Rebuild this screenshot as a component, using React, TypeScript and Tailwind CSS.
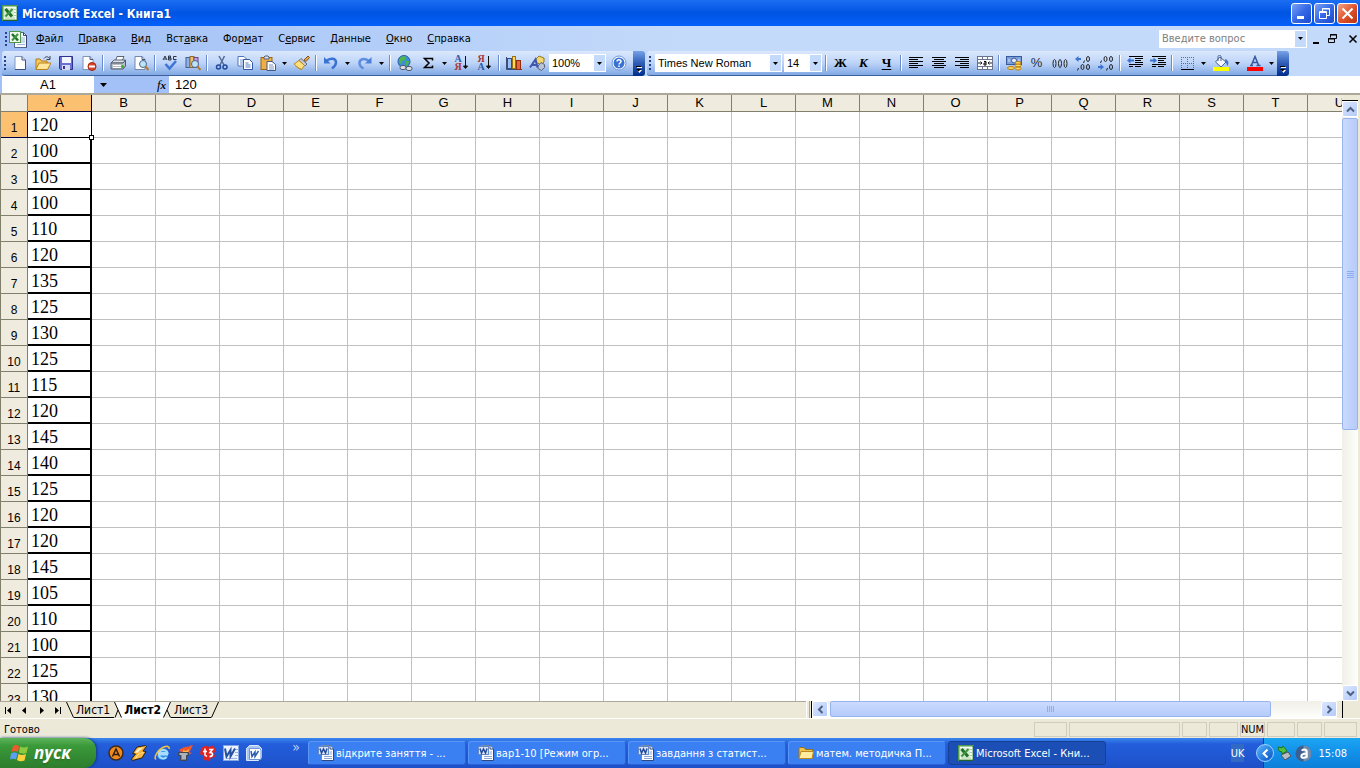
import { ReactNode } from "react";

const columns = "ABCDEFGHIJKLMNOPQRSTU".split("");

const values = [
  120, 100, 105, 100, 110, 120, 135, 125, 130, 125, 115, 120, 145, 140, 125,
  120, 120, 145, 105, 110, 100, 125, 130,
];

const menus = [
  ["", "Ф", "айл"],
  ["", "П", "равка"],
  ["", "В", "ид"],
  ["Вст", "а", "вка"],
  ["Фор", "м", "ат"],
  ["С", "е", "рвис"],
  ["", "Д", "анные"],
  ["", "О", "кно"],
  ["", "С", "правка"],
];

const ui = "font-['Tahoma','DejaVu_Sans_Condensed','Noto_Sans',sans-serif]";
const arial = "font-['Liberation_Sans',Arial,sans-serif]";

function Icon({
  children,
  className = "size-4",
  box = "0 0 16 16",
}: {
  children: ReactNode;
  className?: string;
  box?: string;
}) {
  return (
    <svg viewBox={box} className={`shrink-0 ${className}`} fill="none" aria-hidden="true">
      {children}
    </svg>
  );
}

function ExcelIcon() {
  return (
    <Icon>
      <rect x="0.75" y="0.75" width="14.500" height="14.500" fill="#f4faf0" stroke="#4c9a4a" strokeWidth="1.500" />
      <path d="M10 4.500h4M10 7.500h4M10 10.500h4M3 13h10" stroke="#a9cfa2" />
      <rect x="2" y="3" width="10" height="9" fill="#d5ead0" />
      <path d="M3.500 4l6.500 7.500" stroke="#1f7028" strokeWidth="3" />
      <path d="M10.500 4L3.500 11.500" stroke="#3f9444" strokeWidth="2" />
      <path d="M15.500 1v14.500H1" stroke="#23632a" />
    </Icon>
  );
}

function ExcelDocIcon() {
  return (
    <Icon className="h-[18px] w-[18px]" box="0 0 18 18">
      <path d="M7 2.500h7.500l3 3v12H5.500v-5" fill="#f7faff" stroke="#54688f" />
      <path d="M14.500 2.500v3h3v12" stroke="#33456e" />
      <path d="M12 8h4M12 10h4M12 12h4M8 14.500h8" stroke="#9fb4da" />
      <rect x="0.500" y="1.500" width="11" height="11" fill="#eef7ea" stroke="#4c9a4a" />
      <path d="M3 4l6 6.500" stroke="#1f7028" strokeWidth="2.500" />
      <path d="M9 4l-6 6.500" stroke="#3f9444" strokeWidth="2" />
    </Icon>
  );
}

function WordDocIcon() {
  return (
    <Icon>
      <path d="M3.500 0.500h9l3 3.500v11.500h-12z" fill="#fdfdff" stroke="#7386ab" />
      <path d="M12 0.500V4h3.500v11.500h-12" stroke="#2f477e" />
      <path d="M11.500 7h2.500M11.500 9h2.500M6 11.500h8M6 13.500h8" stroke="#8aa4d4" />
      <rect x="0.500" y="1.500" width="10" height="8" fill="#d7e3f9" stroke="#6487c6" />
      <path d="M2 3.500l1.500 4.500 2-4 2 4L9 3.500" stroke="#244a9b" strokeWidth="1.500" />
    </Icon>
  );
}

function Triangle() {
  return (
    <svg viewBox="0 0 5 3" className="h-[3px] w-[5px] shrink-0" aria-hidden="true">
      <path d="M0 0h5L2.500 3z" fill="#000" />
    </svg>
  );
}

function Tool({ label, children }: { label: string; children: ReactNode }) {
  return (
    <button
      type="button"
      aria-label={label}
      className="flex h-6 w-[23px] shrink-0 items-center justify-center"
    >
      {children}
    </button>
  );
}

function More({ label }: { label: string }) {
  return (
    <button
      type="button"
      aria-label={label}
      className="flex h-6 w-[11px] shrink-0 items-center justify-center"
    >
      <Triangle />
    </button>
  );
}

function Separator() {
  return (
    <div className="flex w-[6px] shrink-0 justify-center">
      <div className="box-content h-4 w-px border-r border-white bg-[#6a8ccb]" />
    </div>
  );
}

function Grip() {
  return (
    <div className="flex w-[6px] shrink-0 flex-col items-center gap-[2px]">
      {[0, 1, 2, 3].map((i) => (
        <div key={i} className="size-[2px] bg-[#27418e]" />
      ))}
    </div>
  );
}

function Combo({
  label,
  value,
  className,
}: {
  label: string;
  value: string;
  className: string;
}) {
  return (
    <div className={`relative h-[18px] shrink-0 bg-white ${className}`}>
      <select
        aria-label={label}
        className={`block h-full w-full appearance-none pl-[3px] text-[11px] text-black ${arial}`}
      >
        <option>{value}</option>
      </select>
      <span className="pointer-events-none absolute inset-y-px right-px flex w-[11px] items-center justify-center bg-[#c4dafa]">
        <Triangle />
      </span>
    </div>
  );
}

function ToolbarEnd() {
  return (
    <button
      type="button"
      aria-label="Параметры панелей инструментов"
      className="flex h-[25px] w-3 shrink-0 items-end justify-center rounded-r-[3px] bg-linear-to-b from-[#76a2e8] via-[#2d5bb4] to-[#002c8c] pb-[3px]"
    >
      <svg viewBox="0 0 6 7" className="h-[7px] w-[6px]" aria-hidden="true">
        <path d="M1 1h5v1H1zM1 4h5L3.500 7z" fill="#fff" />
        <path d="M0 0h5v1H0zM0 3h5L2.500 5.500z" fill="#000" />
      </svg>
    </button>
  );
}

function Glass() {
  return (
    <>
      <circle cx="10" cy="9" r="3.500" fill="#bfe2f7" stroke="#48688f" />
      <path d="M12.500 11.500L15.500 15" stroke="#b8792d" strokeWidth="2" />
    </>
  );
}

function SortLetters({ first, second }: { first: ReactNode; second: ReactNode }) {
  return (
    <span className="flex items-center">
      <span className="flex flex-col font-['Liberation_Serif',serif] text-[10px] leading-[8px] font-bold">
        {first}
        {second}
      </span>
      <Icon className="h-4 w-[7px]" box="0 0 7 16">
        <path d="M3.500 1v12M1.500 11l2 2.500 2-2.500z" stroke="#111" fill="#111" />
      </Icon>
    </span>
  );
}

const standardBar =
  "flex h-[25px] items-center bg-linear-to-b from-[#dbe8fc] via-[#bdd4f8] to-[#82a9e4] border-b border-[#3b619c]";

function StandardToolbar() {
  return (
    <div className="flex shrink-0">
      <div className={`${standardBar} rounded-l-[3px] pr-[3px]`}>
        <Grip />
        <Tool label="Создать">
          <Icon>
            <path d="M3 1.500h7l3.500 3.500v9.500H3z" fill="#fff" stroke="#8298c4" />
            <path d="M10 1.500V5h3.500v9.500H3" stroke="#3c4f7e" />
          </Icon>
        </Tool>
        <Tool label="Открыть">
          <Icon>
            <path d="M1 14V4h4l1.500 2H12v8z" fill="#f6ca5c" stroke="#b17a18" />
            <path d="M1 14.500L4 8h12l-3.500 6.500z" fill="#ffe69a" stroke="#b9821d" />
            <path d="M9 3.500c2-2.500 4-2 5.500 0M15 1v3.500h-3.500" stroke="#333c52" />
          </Icon>
        </Tool>
        <Tool label="Сохранить">
          <Icon>
            <path d="M1.500 1.500h13v13h-12l-1-1z" fill="#6b6fd4" stroke="#2e318f" />
            <rect x="4" y="2" width="9" height="6" fill="#f2f5ff" />
            <rect x="4" y="10" width="8" height="5" fill="#d5daf2" />
            <rect x="5" y="11" width="2" height="3" fill="#30348c" />
          </Icon>
        </Tool>
        <Tool label="Разрешения">
          <Icon>
            <path d="M2 1.500h7L12 4.500v10H2z" fill="#fff" stroke="#8093b9" />
            <path d="M9 1.500v3h3" stroke="#45577f" />
            <circle cx="11" cy="11.500" r="4" fill="#d7482a" stroke="#a52814" />
            <rect x="8" y="10.500" width="6" height="2" fill="#fff" />
          </Icon>
        </Tool>
        <Separator />
        <Tool label="Печать">
          <Icon>
            <path d="M5.500 6l1.500-4.500h7L12 6z" fill="#fff" stroke="#596477" />
            <path d="M1 8l3-3h11.500l-2 3z" fill="#dfe2e8" stroke="#596477" />
            <path d="M1 8h12l2.500-3v6L13 14H1z" fill="#b7bdc7" stroke="#515a6a" />
            <path d="M3 10.500h8M3 12.500h8" stroke="#fff" />
            <circle cx="12.500" cy="11.500" r="1.500" fill="#35b030" />
          </Icon>
        </Tool>
        <Tool label="Просмотр">
          <Icon>
            <path d="M2 1.500h7L12 4.500v10H2z" fill="#fff" stroke="#7186b0" />
            <path d="M9 1.500v3h3" stroke="#45577f" />
            <Glass />
          </Icon>
        </Tool>
        <Separator />
        <Tool label="Орфография">
          <Icon>
            <path d="M1 5l2-4 2 4M2 4h2M6.500 1v4h2.500V3H7h1.500V1zM14.500 1.500h-3v3h3" stroke="#2b3447" />
            <path d="M3.500 9l4 4.500L14 6" stroke="#3f74d6" strokeWidth="2.500" />
          </Icon>
        </Tool>
        <Tool label="Справочные материалы">
          <Icon>
            <rect x="1" y="2.500" width="4" height="10" fill="#8db1e8" stroke="#45609c" />
            <rect x="5" y="1.500" width="4" height="11" fill="#eec067" stroke="#92692a" />
            <rect x="9" y="2.500" width="4" height="10" fill="#c89cd8" stroke="#664789" />
            <Glass />
          </Icon>
        </Tool>
        <Separator />
        <Tool label="Вырезать">
          <Icon>
            <path d="M5 1l5 9M10.500 1l-4.500 9" stroke="#546b98" strokeWidth="1.500" />
            <circle cx="4.500" cy="12" r="2" stroke="#21499c" strokeWidth="1.500" />
            <circle cx="11" cy="12" r="2" stroke="#21499c" strokeWidth="1.500" />
          </Icon>
        </Tool>
        <Tool label="Копировать">
          <Icon>
            <path d="M1 1.500h6l2.500 2.500v7H1z" fill="#fff" stroke="#5273bc" />
            <path d="M3 5h4M3 7h4M3 9h3" stroke="#6f90d2" />
            <path d="M6.500 4.500h6l3 3v7h-9z" fill="#fff" stroke="#3458a8" />
            <path d="M8.500 8h3M8.500 10h5M8.500 12h5" stroke="#5078c8" />
          </Icon>
        </Tool>
        <Tool label="Вставить">
          <Icon>
            <rect x="1" y="2.500" width="11" height="12" fill="#edae43" stroke="#9c6417" />
            <path d="M4 4V2l1-1h3l1 1v2z" fill="#dce2ed" stroke="#555f73" />
            <path d="M7 6.500h5l3.500 3v6H7z" fill="#fff" stroke="#40588c" />
            <path d="M9 10h4M9 12h5M9 14h5" stroke="#7b95c6" />
          </Icon>
        </Tool>
        <More label="Параметры вставки" />
        <Tool label="Формат по образцу">
          <Icon>
            <path d="M10 5l4-4 1.500 1.500-3.500 4z" fill="#e9a548" stroke="#80551c" />
            <path d="M7 3.500l6 5.500-2 2-6-5.500z" fill="#c7cbd6" stroke="#636a7d" />
            <path d="M5 5.500l5.500 5-3.500 4.500-1-2-1 1-1-2-1.500 0-1-2-1.500-1z" fill="#ffe27d" stroke="#b78922" />
          </Icon>
        </Tool>
        <Separator />
        <Tool label="Отменить">
          <Icon>
            <path d="M3 6c5-4 10-2.500 10 1.500 0 3-2 4.500-4 6" stroke="#3a73d4" strokeWidth="2.500" />
            <path d="M1 2v6.500h6.500z" fill="#3a73d4" />
          </Icon>
        </Tool>
        <More label="Список отмены" />
        <Tool label="Вернуть">
          <Icon>
            <path d="M12 6C7 2.500 2.500 4 2.500 8c0 2.500 2 4.500 4 5.500" stroke="#5e8ee0" strokeWidth="2.500" />
            <path d="M14.500 2v6.500H8z" fill="#4d80d8" />
          </Icon>
        </Tool>
        <More label="Список возврата" />
        <Separator />
        <Tool label="Гиперссылка">
          <Icon>
            <circle cx="7" cy="6.500" r="6" fill="#3e8fd9" stroke="#2a5ba3" />
            <path d="M3 3c2-2 5-2 6-1l-1 3-3 1-1 3-2-2zM9 6l3 0-1 4-2 1z" fill="#4db849" />
            <rect x="3" y="10.500" width="6" height="4" rx="2" stroke="#525a6b" fill="#d9dde6" />
            <rect x="9" y="11.500" width="6" height="4" rx="2" stroke="#525a6b" fill="#d9dde6" />
          </Icon>
        </Tool>
        <Tool label="Автосумма">
          <Icon>
            <path d="M12.500 5.500V3.500h-8L9 8l-4.500 4.500h8v-2" stroke="#000" strokeWidth="1.500" />
          </Icon>
        </Tool>
        <More label="Функции" />
        <Tool label="По возрастанию">
          <SortLetters
            first={<span className="text-[#3058a8]">А</span>}
            second={<span className="text-[#a63838]">Я</span>}
          />
        </Tool>
        <Tool label="По убыванию">
          <SortLetters
            first={<span className="text-[#a63838]">Я</span>}
            second={<span className="text-[#3058a8]">А</span>}
          />
        </Tool>
        <Separator />
        <Tool label="Мастер диаграмм">
          <Icon>
            <path d="M0.500 2v12.500H16" stroke="#3a4c78" />
            <rect x="1.500" y="3.500" width="4" height="10" fill="#9fc0f5" stroke="#2d4f99" />
            <rect x="6.500" y="1.500" width="3" height="12" fill="#ffd75a" stroke="#997016" />
            <rect x="10.500" y="5.500" width="4" height="9" fill="#e8663a" stroke="#8f2e12" />
          </Icon>
        </Tool>
        <Tool label="Рисование">
          <Icon>
            <path d="M7 4l3-3 5 2v4l-3 3-5-3z" fill="#f3d66d" stroke="#947726" />
            <path d="M9 11l3-3.500 3.500 2v3l-3 3-3.500-2z" fill="#b9c3d7" stroke="#59647c" />
            <path d="M1 12.500L6.500 4.500l2 8M3 10h5" stroke="#3f56b0" strokeWidth="2" />
          </Icon>
        </Tool>
        <Combo label="Масштаб" value="100%" className="mx-px w-[57px]" />
        <Tool label="Справка">
          <Icon>
            <circle cx="8" cy="8" r="7" fill="#fff" stroke="#6d97dd" />
            <circle cx="8" cy="8" r="5.500" fill="#3972d3" />
            <path d="M6 6.500C6 4 10 4 10 6.500c0 1.500-2 1.500-2 3M8 10.500V12" stroke="#fff" strokeWidth="1.500" />
          </Icon>
        </Tool>
      </div>
      <ToolbarEnd />
    </div>
  );
}

function Lines({ d }: { d: string }) {
  return (
    <Icon>
      <path d={d} stroke="#000" />
    </Icon>
  );
}

function FormattingToolbar() {
  return (
    <div className="flex shrink-0">
      <div className={`${standardBar} rounded-l-[3px]`}>
        <Grip />
        <Combo label="Шрифт" value="Times New Roman" className="mr-px ml-[2px] w-[127px]" />
        <Combo label="Размер" value="14" className="mx-px w-[38px]" />
        <Separator />
        <Tool label="Полужирный">
          <span className="font-['Liberation_Serif',serif] text-[13px] leading-4 font-bold">Ж</span>
        </Tool>
        <Tool label="Курсив">
          <span className="font-['Liberation_Serif',serif] text-[13px] leading-4 font-bold italic">К</span>
        </Tool>
        <Tool label="Подчеркнутый">
          <span className="font-['Liberation_Serif',serif] text-[13px] leading-4 font-bold underline underline-offset-2">
            Ч
          </span>
        </Tool>
        <Separator />
        <Tool label="По левому краю">
          <Lines d="M1 2.500h14M1 4.500h9M1 6.500h14M1 8.500h9M1 10.500h14M1 12.500h9" />
        </Tool>
        <Tool label="По центру">
          <Lines d="M1 2.500h14M3 4.500h10M1 6.500h14M3 8.500h10M1 10.500h14M3 12.500h10" />
        </Tool>
        <Tool label="По правому краю">
          <Lines d="M1 2.500h14M6 4.500h9M1 6.500h14M6 8.500h9M1 10.500h14M6 12.500h9" />
        </Tool>
        <Tool label="Объединить">
          <Icon>
            <rect x="0.500" y="1.500" width="15" height="13" fill="#fff" stroke="#68758c" />
            <path d="M5.500 1v3M10.500 1v3M5.500 12v3M10.500 12v3M1 4.500h14M1 11.500h14" stroke="#68758c" />
            <path d="M1 8h4M3.500 6.500L5 8 3.500 9.500M15 8h-4M12.500 6.500L11 8l1.500 1.500" stroke="#222" />
            <path d="M7 6.500h2V10H7V8h2" stroke="#000" />
          </Icon>
        </Tool>
        <Separator />
        <Tool label="Денежный формат">
          <Icon>
            <rect x="0.500" y="1.500" width="15" height="8" fill="#7f9fd9" stroke="#38599c" />
            <circle cx="8" cy="5.500" r="2.500" fill="#dfeafb" stroke="#38599c" />
            <path d="M3 4v3M13 4v3" stroke="#dfeafb" />
            <ellipse cx="12" cy="8" rx="3" ry="1.500" fill="#ffd75e" stroke="#b37d12" />
            <ellipse cx="12" cy="10.500" rx="3" ry="1.500" fill="#ffd75e" stroke="#b37d12" />
            <ellipse cx="12" cy="13.500" rx="3" ry="1.500" fill="#ffd75e" stroke="#b37d12" />
            <ellipse cx="5" cy="13" rx="3.500" ry="1.500" fill="#ffd75e" stroke="#b37d12" />
          </Icon>
        </Tool>
        <Tool label="Процентный формат">
          <span className={`text-[13px] text-[#222c44] ${arial}`}>%</span>
        </Tool>
        <Tool label="Формат с разделителями">
          <Icon>
            <ellipse cx="2.500" cy="8.500" rx="1.500" ry="4" stroke="#222" />
            <ellipse cx="8" cy="8.500" rx="1.500" ry="4" stroke="#222" />
            <ellipse cx="13.500" cy="8.500" rx="1.500" ry="4" stroke="#222" />
          </Icon>
        </Tool>
        <Tool label="Увеличить разрядность">
          <Icon>
            <path d="M0 4L3.500 1v2H6v2H3.500v2z" fill="#3d73d0" />
            <path d="M9.500 5.500L8.500 8M3.500 13L2.500 15.500" stroke="#222" />
            <ellipse cx="13" cy="4" rx="1.500" ry="2.500" stroke="#222" />
            <ellipse cx="7.500" cy="12" rx="1.500" ry="2.500" stroke="#222" />
            <ellipse cx="13" cy="12" rx="1.500" ry="2.500" stroke="#222" />
          </Icon>
        </Tool>
        <Tool label="Уменьшить разрядность">
          <Icon>
            <path d="M6 12L2.500 9v2H0v2h2.500v2z" fill="#3d73d0" />
            <path d="M3.500 5.500L2.500 8M9.500 13L8.500 15.500" stroke="#222" />
            <ellipse cx="7.500" cy="4" rx="1.500" ry="2.500" stroke="#222" />
            <ellipse cx="13" cy="4" rx="1.500" ry="2.500" stroke="#222" />
            <ellipse cx="13" cy="12" rx="1.500" ry="2.500" stroke="#222" />
          </Icon>
        </Tool>
        <Separator />
        <Tool label="Уменьшить отступ">
          <Icon>
            <path d="M2 1.500h14M8 3.500h8M8 5.500h6M8 7.500h8M2 9.500h14M2 11.500h4M8 11.500h6" stroke="#000" />
            <path d="M0 5.500l3.500-3v2H7v2H3.500v2z" fill="#3d73d0" />
          </Icon>
        </Tool>
        <Tool label="Увеличить отступ">
          <Icon>
            <path d="M2 1.500h14M8 3.500h8M8 5.500h6M8 7.500h8M2 9.500h14M2 11.500h4M8 11.500h6" stroke="#000" />
            <path d="M7 5.500l-3.500-3v2H0v2h3.500v2z" fill="#3d73d0" />
          </Icon>
        </Tool>
        <Separator />
        <Tool label="Границы">
          <Icon>
            <path
              d="M2 2.500h13M2 8.500h13M2.500 2v12M8.500 2v12M14.500 2v12"
              stroke="#5d6c8b"
              strokeDasharray="1 1"
            />
            <path d="M2 14.500h13" stroke="#000" />
          </Icon>
        </Tool>
        <More label="Виды границ" />
        <Tool label="Цвет заливки">
          <Icon>
            <path d="M7 2l6 5-5 5-5.500-5z" fill="#f2f6ff" stroke="#4c648f" />
            <path d="M5 6V1.500C5 0 8 0 8 1.500V6" stroke="#4c648f" />
            <path d="M12 4c3 1 4.500 3 2.500 7-1-1-1-3-2-4z" fill="#3f73cc" />
            <rect y="12" width="16" height="4" fill="#ff0" />
          </Icon>
        </Tool>
        <More label="Палитра заливки" />
        <Tool label="Цвет шрифта">
          <Icon>
            <path d="M3 10.500h3M9.500 10.500h4M4.500 10L8 1.500 11.500 10M5.500 7.500h5" stroke="#34599f" strokeWidth="1.500" />
            <rect y="12" width="16" height="4" fill="#f00" />
          </Icon>
        </Tool>
        <More label="Палитра шрифта" />
      </div>
      <ToolbarEnd />
    </div>
  );
}

function TitleButton({
  label,
  children,
  close,
}: {
  label: string;
  children: ReactNode;
  close?: boolean;
}) {
  return (
    <button
      type="button"
      aria-label={label}
      className={`flex size-[21px] items-center justify-center rounded-[3px] border border-white bg-linear-to-br ${
        close ? "from-[#f0a284] via-[#e0532c] to-[#b83210]" : "from-[#7aa0f5] via-[#3668e6] to-[#1c4acd]"
      }`}
    >
      <Icon className="size-[15px]" box="0 0 15 15">
        {children}
      </Icon>
    </button>
  );
}

function TitleBar() {
  return (
    <header className="flex h-[26px] shrink-0 items-center gap-1 bg-linear-to-b from-[#1b6df2] via-[#0054e3] to-[#0560fb] pr-[2px] pl-[2px]">
      <ExcelIcon />
      <h1 className={`flex-1 pt-px text-[12px] font-bold text-white text-shadow-xs ${ui}`}>
        Microsoft Excel - Книга1
      </h1>
      <div className="flex gap-[2px]">
        <TitleButton label="Свернуть">
          <rect x="3" y="10" width="7" height="3" fill="#fff" />
        </TitleButton>
        <TitleButton label="Восстановить">
          <path d="M5.500 5V2.500h7v7H10M5 3h8" stroke="#fff" />
          <path d="M2.500 5.500h7v7h-7zM2 6.500h8" stroke="#fff" />
        </TitleButton>
        <TitleButton label="Закрыть" close>
          <path d="M2.500 2.500l10 10M12.500 2.500l-10 10" stroke="#fff" strokeWidth="2" />
        </TitleButton>
      </div>
    </header>
  );
}

function MenuBar() {
  return (
    <nav className={`flex h-[25px] items-center text-[11px] ${ui}`}>
      <div className="ml-[3px]">
        <Grip />
      </div>
      <ExcelDocIcon />
      <div className="ml-[2px] flex gap-px">
        {menus.map(([before, key, after]) => (
          <button key={before + key + after} type="button" className="h-5 px-[7px] pt-px">
            {before}
            <u>{key}</u>
            {after}
          </button>
        ))}
      </div>
      <div className="relative ml-auto h-[18px] w-[148px] bg-white">
        <input
          aria-label="Введите вопрос"
          placeholder="Введите вопрос"
          className="block h-full w-full pl-[3px] placeholder:text-[#808080]"
        />
        <button
          type="button"
          aria-label="Список вопросов"
          className="absolute inset-y-px right-px flex w-[11px] items-center justify-center bg-[#c4dafa]"
        >
          <Triangle />
        </button>
      </div>
      <div className="flex gap-1 pr-px pl-1">
        <button type="button" aria-label="Свернуть книгу">
          <Icon className="size-3" box="0 0 12 12">
            <path d="M2 10h6" stroke="#000" strokeWidth="2" />
          </Icon>
        </button>
        <button type="button" aria-label="Восстановить книгу">
          <Icon className="size-3" box="0 0 12 12">
            <path d="M3.500 4.500v-3h6v4H8M3 2h7M1.500 5.500h6v4h-6zM1 6h7" stroke="#000" />
          </Icon>
        </button>
        <button type="button" aria-label="Закрыть книгу" className="ml-1">
          <Icon className="size-3" box="0 0 12 12">
            <path d="M2.500 2.500l7 7M9.500 2.500l-7 7" stroke="#000" strokeWidth="1.500" />
          </Icon>
        </button>
      </div>
    </nav>
  );
}

function FormulaBar() {
  return (
    <div className={`flex h-[17px] shrink-0 bg-[#a3c1f6] pl-[2px] text-[13px] ${arial}`}>
      <input
        aria-label="Имя"
        defaultValue="A1"
        className="w-[92px] bg-white text-center"
      />
      <button type="button" aria-label="Список имен" className="flex w-[18px] items-center justify-center">
        <svg viewBox="0 0 7 4" className="h-1 w-[7px]" aria-hidden="true">
          <path d="M0 0h7L3.500 4z" fill="#000" />
        </svg>
      </button>
      <button
        type="button"
        aria-label="Вставка функции"
        className="ml-auto font-['Liberation_Serif',serif] text-[13px] leading-4 italic"
      >
        f<span className="text-[11px] font-bold">x</span>
      </button>
      <input
        aria-label="Строка формул"
        defaultValue="120"
        className="ml-[3px] w-[calc(100%-167px)] bg-white pl-[6px]"
      />
    </div>
  );
}

function Sheet() {
  return (
    <table className="w-[1371px] table-fixed border-separate border-spacing-0 bg-white">
      <thead>
        <tr className={`text-[13px] ${arial}`}>
          <th className="h-[17px] w-[27px] border-r border-b border-[#807f6b] bg-[#efebde] p-0" />
          {columns.map((c, i) => (
            <th
              key={c}
              scope="col"
              className={`w-16 border-r border-b p-0 leading-4 font-normal ${
                i === 0 ? "border-[#00004a] bg-[#fbc070]" : "border-[#807f6b] bg-[#efebde]"
              }`}
            >
              {c}
            </th>
          ))}
        </tr>
      </thead>
      <tbody>
        {values.map((v, row) => (
          <tr key={row}>
            <th
              scope="row"
              className={`h-[26px] border-r border-b p-0 align-bottom text-[12px] leading-[18px] font-normal ${arial} ${
                row === 0 ? "border-[#00004a] bg-[#fbc070]" : "border-[#807f6b] bg-[#efebde]"
              }`}
            >
              {row + 1}
            </th>
            {columns.map((c, i) =>
              i === 0 ? (
                <td
                  key={c}
                  className={`relative border-black p-0 pl-[3px] font-['Liberation_Serif',serif] text-[18px] leading-[22px] ${
                    row === 0 ? "border-r border-b" : "border-r-2 border-b-2 pt-[2px]"
                  }`}
                >
                  {v}
                  {row === 0 && (
                    <span className="absolute -right-[3px] -bottom-[3px] z-10 size-[5px] border border-black bg-white" />
                  )}
                </td>
              ) : (
                <td key={c} className="border-r border-b border-[#c0c0c0] p-0" />
              )
            )}
          </tr>
        ))}
      </tbody>
    </table>
  );
}

function ScrollButton({ label, d }: { label: string; d: string }) {
  return (
    <button
      type="button"
      aria-label={label}
      className="flex size-4 shrink-0 items-center justify-center rounded-[2px] border border-white bg-linear-to-br from-[#dbe6ff] to-[#b3caf9]"
    >
      <Icon className="size-[9px]" box="0 0 9 9">
        <path d={d} stroke="#4d6185" strokeWidth="2" />
      </Icon>
    </button>
  );
}

function VerticalScroll() {
  return (
    <div className="flex w-4 shrink-0 flex-col bg-linear-to-r from-[#f0efe8] to-[#fefefb]">
      <div className="h-[6px] shrink-0 border-b border-black bg-[#ece9d8]" />
      <ScrollButton label="Вверх" d="M1 6.500L4.500 3 8 6.500" />
      <div className="mt-px flex h-[312px] flex-col items-center justify-center gap-px rounded-[2px] border border-[#98b4ee] bg-linear-to-r from-[#cbdafe] to-[#b5cbfa]">
        {[0, 1, 2, 3].map((i) => (
          <div key={i} className="h-px w-[7px] bg-[#8cadf2]" />
        ))}
      </div>
      <div className="mt-auto">
        <ScrollButton label="Вниз" d="M1 2.500L4.500 6 8 2.500" />
      </div>
    </div>
  );
}

function NavButton({ label, d }: { label: string; d: string }) {
  return (
    <button type="button" aria-label={label} className="flex w-[17px] items-center justify-center">
      <svg viewBox="0 0 7 7" className="size-[7px]" aria-hidden="true">
        <path d={d} fill="#000" />
      </svg>
    </button>
  );
}

function Slant({ d, fill, fillColor }: { d: string; fill?: string; fillColor?: string }) {
  return (
    <svg viewBox="0 0 8 16" className="h-4 w-2 shrink-0" aria-hidden="true">
      {fill && <path d={fill} fill={fillColor} />}
      <path d={d} stroke="#000" fill="none" />
    </svg>
  );
}

function SheetTabs() {
  return (
    <div className="flex h-[17px] shrink-0 bg-[#ece9d8]">
      <div className={`flex flex-1 border-t border-[#aca899] text-[12px] leading-4 ${ui}`}>
        <div className="flex w-[66px]">
          <NavButton label="Первый лист" d="M0 0h1v7H0zM6 0v7L2 3.500z" />
          <NavButton label="Предыдущий лист" d="M5 0v7L1 3.500z" />
          <NavButton label="Следующий лист" d="M2 0v7l4-3.500z" />
          <NavButton label="Последний лист" d="M1 0v7l4-3.500zM6 0h1v7H6z" />
        </div>
        <Slant d="M0.500 0L7.500 15.500" />
        <button type="button" className="border-b border-black pr-1 pl-[2px]">Лист1</button>
        <Slant d="M0.500 0L7.500 15.500M4 8L1 15.500" fill="M0 0h8v16z" fillColor="#fff" />
        <button type="button" className="bg-white px-[2px] font-bold">Лист2</button>
        <Slant d="M7.500 0L0.500 15.500M4 8L7.500 15.500" fill="M0 0h8L0 16z" fillColor="#fff" />
        <button type="button" className="border-b border-black px-[3px]">Лист3</button>
        <Slant d="M7.500 0L0.500 15.500" />
      </div>
      <div className="mr-[1px] w-1 border-r border-l border-r-[#aca899] border-l-white" />
      <div className="flex w-[39.100%] border-l border-black bg-linear-to-b from-[#f0efe8] to-[#fefefb]">
        <ScrollButton label="Влево" d="M6.500 1L3 4.500 6.500 8" />
        <div className="ml-[2px] flex h-4 w-[441px] items-center justify-center gap-px rounded-[2px] border border-[#98b4ee] bg-linear-to-b from-[#cbdafe] to-[#b5cbfa]">
          {[0, 1, 2, 3].map((i) => (
            <div key={i} className="h-[6px] w-px bg-[#8cadf2]" />
          ))}
        </div>
        <div className="ml-auto">
          <ScrollButton label="Вправо" d="M2.500 1L6 4.500 2.500 8" />
        </div>
        <div className="w-[6px] border-r border-black bg-[#ece9d8]" />
      </div>
      <div className="w-[17px]" />
    </div>
  );
}

function StatusBox({ className, children }: { className: string; children?: ReactNode }) {
  return (
    <div
      className={`flex h-[15px] shrink-0 items-center justify-center border border-[#d0ccc0] ${className}`}
    >
      {children}
    </div>
  );
}

function StatusBar() {
  return (
    <div
      className={`flex h-5 shrink-0 items-center gap-[2px] border-t border-white bg-[#ece9d8] pt-[2px] pr-[3px] pl-1 text-[11px] ${ui}`}
    >
      <span className="flex-1 pt-[2px]">Готово</span>
      <StatusBox className="w-[33px]" />
      <StatusBox className="w-[111px]" />
      <StatusBox className="w-[25px]" />
      <StatusBox className="w-[29px]" />
      <StatusBox className="w-[25px]">
        <span className="pt-[2px]">NUM</span>
      </StatusBox>
      <StatusBox className="w-[28px]" />
      <StatusBox className="w-[25px]" />
      <StatusBox className="w-[33px]" />
    </div>
  );
}

function FolderIcon() {
  return (
    <Icon>
      <path d="M1 13V3.500l1-1h4l1.500 2H14.500V13z" fill="#f0c34e" stroke="#9a7218" />
      <path d="M1 13.500L3 6.500H15.500L14 13.500z" fill="#ffec9e" stroke="#b98a20" />
    </Icon>
  );
}

const tasks = [
  { title: "відкрите заняття - ...", icon: <WordDocIcon /> },
  { title: "вар1-10 [Режим огр...", icon: <WordDocIcon /> },
  { title: "завдання з статист...", icon: <WordDocIcon /> },
  { title: "матем. методичка П...", icon: <FolderIcon /> },
  { title: "Microsoft Excel - Кни...", icon: <ExcelIcon />, active: true },
];

function QuickLaunch() {
  return (
    <div className="flex w-[193px] shrink-0 items-center gap-[7px] pl-px">
      <button type="button" aria-label="AIMP">
        <Icon>
          <circle cx="8" cy="8" r="7" fill="#f08a1c" stroke="#3a2a20" strokeWidth="1.500" />
          <path d="M4.500 11.500L8 4l3.500 7.500M6 9.500h4" stroke="#2b1c12" strokeWidth="1.500" />
        </Icon>
      </button>
      <button type="button" aria-label="Winamp">
        <Icon>
          <path d="M14.500 0.500L6 2 1.500 8.500l3 0.500L0.500 14l1 1.500L11 13l4-6.500-3-0.500 3.500-4.500z" fill="#f7a823" stroke="#222" />
          <path d="M13 2L7 3.500 3.500 8l5-0.500L3 14l7-2.500 3-4.500-4.500 1z" fill="#fff0c0" />
          <path d="M13 2L8 6l-1 2.500 2-0.500L5 13l5-1.500 2-3.500-3 0.500z" fill="#f9b43a" />
        </Icon>
      </button>
      <button type="button" aria-label="Internet Explorer">
        <Icon>
          <circle cx="8.500" cy="9" r="6" fill="#2f8fe6" />
          <path d="M14 9.500H5c0 4.500 6 5 7.500 2.500M5 8c1-4 7.500-4 8.500 0z" stroke="#a9dcff" strokeWidth="2" />
          <path d="M2 14.500C-1 12 5 3 11.500 1.500 14 1 15.500 2 15 4" stroke="#f5c342" strokeWidth="1.500" />
        </Icon>
      </button>
      <button type="button" aria-label="Nero">
        <Icon>
          <path d="M2 5c2-2 3-1 5-3 1 1 2-1 4 0 1-1 3-2 5-2-2 3-2 6-4 7l3 1-4 2-7-3z" fill="#f0562a" />
          <path d="M6 5l3 1 3-2-1 4-5 1z" fill="#ffb84a" />
          <path d="M1.500 7.500h10v3h-2v5h-6v-5h-2z" fill="#7d8492" stroke="#3f4451" />
          <path d="M3 9h7M5 11h4M5 13h4" stroke="#e0e3ea" />
        </Icon>
      </button>
      <button type="button" aria-label="Переводчик">
        <Icon>
          <path d="M1 3l5-2.500 3 1.500 4-1.500L16 5l-2 3 1 4-4 1-2 3-6-1.500 1-4-4-1z" fill="#e02222" />
          <path d="M5 3.500v6.500l2 1.500M3 6.500h4M9 4.500h3.500L10 7.500c4 0 3 4-0.500 4" stroke="#fff" strokeWidth="1.500" />
        </Icon>
      </button>
      <button type="button" aria-label="Word">
        <Icon>
          <rect x="0.500" y="0.500" width="15" height="15" fill="#eaf1ff" stroke="#84a7e4" />
          <path d="M12 4.500h3M12 7.500h3M12 10.500h3M3 13.500h11" stroke="#9bb5e6" />
          <path d="M2 3.500l1.500 8L7.500 5v6.500L12 3.500" stroke="#264f9f" strokeWidth="2" />
        </Icon>
      </button>
      <button type="button" aria-label="Документ Word">
        <Icon>
          <path d="M0.500 3.500l3-3h9l3 3v9l-3 3H0.500z" fill="#a9c6f2" stroke="#dbe8ff" />
          <path d="M3.500 3.500h10l1.500 1.500v9.500H3.500z" fill="#fff" stroke="#6d92d6" />
          <path d="M5 6l1 5.500L9 7v4.500L12.500 6" stroke="#2e5cb2" strokeWidth="1.500" />
        </Icon>
      </button>
      <button
        type="button"
        aria-label="Еще значки"
        className="mb-3 ml-auto text-[14px] leading-4 text-[#b4d2ff]"
      >
        »
      </button>
    </div>
  );
}

function Taskbar() {
  return (
    <footer
      className={`flex h-[30px] shrink-0 bg-linear-to-b from-[#3a86ee] via-[#245edb] via-20% to-[#1c50c8] text-[11px] text-white ${ui}`}
    >
      <button
        type="button"
        className="flex w-24 shrink-0 items-center gap-1 rounded-r-xl bg-linear-to-b from-[#5eb45c] via-[#3b9a3a] via-25% to-[#2c7d2c] pl-[10px] font-['Open_Sans','Noto_Sans',sans-serif] text-[17px] font-bold italic shadow-[1px_0_3px_#103a80] text-shadow-sm"
      >
        <Icon className="h-[18px] w-5" box="0 0 20 18">
          <path d="M3 2c3-1.500 4-1 6 0L8 8C6 7 4 6.500 1.500 8z" fill="#f0582e" />
          <path d="M10 2.500c3 1.500 5 1 8 0L16.500 9c-3 1-4.500 1-7.500-0.500z" fill="#8cca3e" />
          <path d="M1 9.500c3-1.500 4-1 6.500 0L6 15.500C4 14.500 2 14.500 0 15.500z" fill="#5ba0f4" />
          <path d="M8.500 10c3 1.500 5 1 7.500 0l-1.500 6.500c-3 1-5 1-7.500-0.500z" fill="#fbd23c" />
        </Icon>
        пуск
      </button>
      <div className="w-[11px] shrink-0" />
      <QuickLaunch />
      <div className="flex min-w-0 flex-1 items-center gap-[2px] pl-2">
        {tasks.map((task) => (
          <button
            key={task.title}
            type="button"
            className={`flex h-6 w-[158px] items-center gap-[2px] rounded-[3px] border pl-[9px] whitespace-nowrap ${
              task.active
                ? "border-[#173f93] bg-[#1c4fb5]"
                : "border-[#5a97f7] border-r-[#2a62d8] border-b-[#2a62d8] bg-[#3b80f3]"
            }`}
          >
            {task.icon}
            <span className="pt-[2px]">{task.title}</span>
          </button>
        ))}
      </div>
      <div className="flex items-center">
        <span className="mr-[19px] bg-[#316ac5] pt-[2px] leading-4">UK</span>
      </div>
      <div className="flex shrink-0 items-center gap-[2px] border-l border-[#0b3f9c] bg-linear-to-b from-[#1ca5f2] via-[#1290e9] to-[#0d7fd8] pr-[13px]">
        <button
          type="button"
          aria-label="Показать значки"
          className="-ml-2 flex size-[18px] items-center justify-center rounded-full border border-[#9bd3ff] bg-linear-to-br from-[#56b3fb] to-[#0a52c6]"
        >
          <Icon className="size-[9px]" box="0 0 9 9">
            <path d="M6.500 0.500l-4 4 4 4" stroke="#fff" strokeWidth="2" />
          </Icon>
        </button>
        <Icon>
          <path d="M5 10l7-3 3 4-6 4z" fill="#b8bdc4" stroke="#50565e" />
          <path d="M2 2l4 1 1-2 4 5-5 3 0-2-3-1z" fill="#4fc23f" stroke="#22761b" />
        </Icon>
        <Icon className="ml-px size-[17px]">
          <circle cx="8" cy="8" r="7.500" fill="#3c5f91" />
          <path d="M8 0.500a7.500 7.500 0 010 15z" fill="#6f8cae" />
          <path d="M6.500 5.500c1-2 4.500-1.500 4.500 1v5.500M11 8c-3 0-5 0.500-5 2.500s4 2 5 0" stroke="#fff" strokeWidth="2" />
        </Icon>
        <time className="ml-1 pt-[2px]">15:08</time>
      </div>
    </footer>
  );
}

export default function App() {
  return (
    <div className="flex h-screen flex-col overflow-hidden bg-[#ece9d8] text-black">
      <TitleBar />
      <div className="shrink-0 bg-linear-to-r from-[#9ebef5] to-[#c4dafa] to-50%">
        <MenuBar />
        <div className="flex gap-[2px] pl-[2px]">
          <StandardToolbar />
          <FormattingToolbar />
        </div>
      </div>
      <FormulaBar />
      <main className="flex min-h-0 flex-1 border-t-2 border-[#aca899] pr-[2px]">
        <div className="min-w-0 flex-1 overflow-hidden border-l border-[#807f6b]">
          <Sheet />
        </div>
        <VerticalScroll />
      </main>
      <SheetTabs />
      <StatusBar />
      <Taskbar />
    </div>
  );
}
